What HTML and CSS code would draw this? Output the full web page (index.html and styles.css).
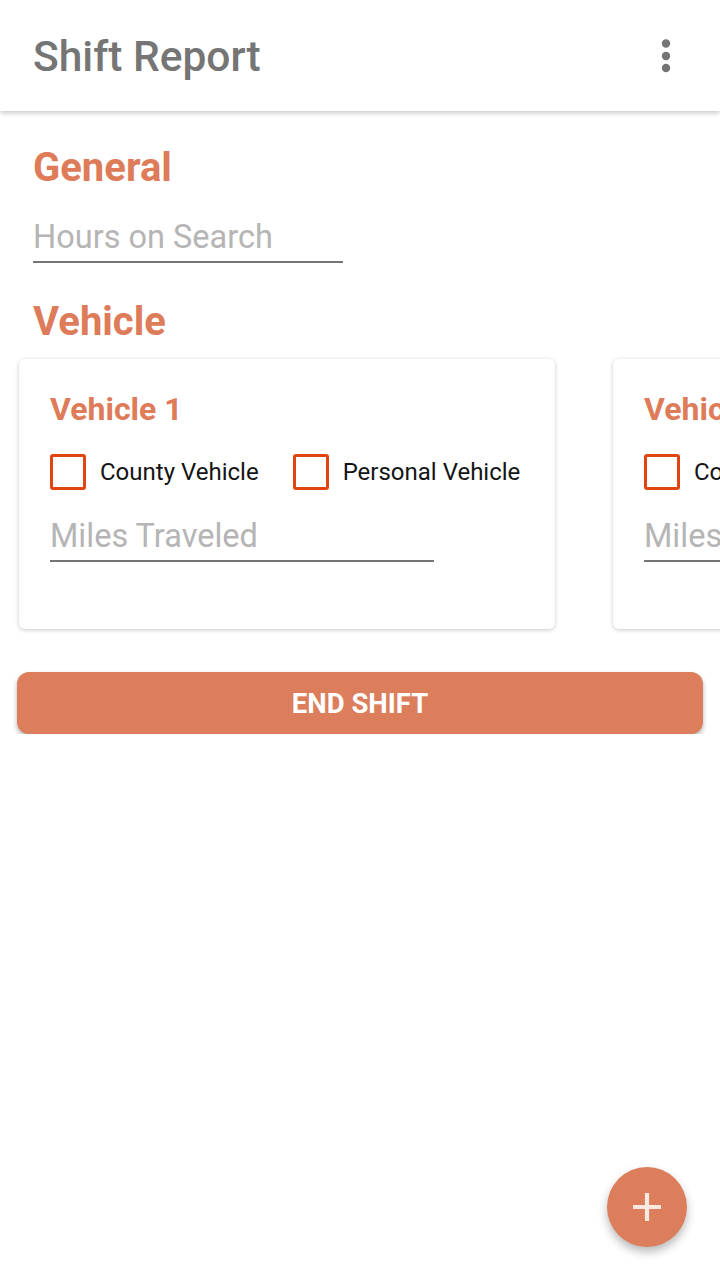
FILE: index.html
```html
<!DOCTYPE html>
<html lang="en">
<head>
<meta charset="utf-8">
<title>Shift Report</title>
<link rel="stylesheet" href="styles.css">
</head>
<body>
<header class="app-bar">
  <h1 class="app-title">Shift Report</h1>
  <button class="menu-btn" aria-label="More options">
    <svg width="10" height="34" viewBox="0 0 10 34"><circle cx="5" cy="4.5" r="4.2" fill="#757575"/><circle cx="5" cy="17" r="4.2" fill="#757575"/><circle cx="5" cy="29" r="4.2" fill="#757575"/></svg>
  </button>
</header>

<main class="content">
  <section class="section">
    <h2 class="section-title">General</h2>
    <input class="field field-hours" type="text" placeholder="Hours on Search">
  </section>

  <section class="section">
    <h2 class="section-title section-title-vehicle">Vehicle</h2>
  </section>

  <div class="card-row">
    <div class="card">
      <h3 class="card-title">Vehicle 1</h3>
      <div class="check-row">
        <label class="check"><input type="checkbox" class="check-box"><span class="check-label">County Vehicle</span></label>
        <label class="check"><input type="checkbox" class="check-box"><span class="check-label">Personal Vehicle</span></label>
      </div>
      <input class="field field-miles" type="text" placeholder="Miles Traveled">
    </div>
    <div class="card">
      <h3 class="card-title">Vehicle 2</h3>
      <div class="check-row">
        <label class="check"><input type="checkbox" class="check-box"><span class="check-label">County Vehicle</span></label>
        <label class="check"><input type="checkbox" class="check-box"><span class="check-label">Personal Vehicle</span></label>
      </div>
      <input class="field field-miles" type="text" placeholder="Miles Traveled">
    </div>
  </div>

  <div class="actions">
    <button class="end-btn">END SHIFT</button>
  </div>
</main>

<button class="fab" aria-label="Add">
  <svg width="30" height="30" viewBox="0 0 30 30"><path d="M15 1v28M1 15h28" stroke="#fbe9df" stroke-width="4.2" fill="none"/></svg>
</button>
</body>
</html>
```

FILE: styles.css
```css
* { box-sizing: border-box; }

html, body {
  margin: 0;
  padding: 0;
  background: #ffffff;
  font-family: Roboto, "Noto Sans", "Liberation Sans", sans-serif;
}

.app-bar {
  height: 111px;
  display: flex;
  align-items: center;
  justify-content: space-between;
  padding: 0 41px 0 33px;
  background: #ffffff;
  box-shadow: 0 2px 5px rgba(0, 0, 0, 0.22);
  position: relative;
  z-index: 2;
}

.app-title {
  margin: 0;
  font-size: 42.5px;
  font-weight: 500;
  color: #757575;
  line-height: 50px;
  padding-top: 2px;
}

.menu-btn {
  border: 0;
  background: none;
  padding: 0;
  width: 26px;
  height: 40px;
  display: flex;
  align-items: center;
  justify-content: center;
}

.content {
  padding: 0;
}

.section {
  padding: 0 33px;
}

.section-title {
  margin: 33px 0 0;
  font-size: 40px;
  line-height: 47px;
  font-weight: 700;
  color: #de7b59;
}

.section-title-vehicle {
  margin-top: 35px;
}

.field {
  display: block;
  border: 0;
  border-bottom: 2px solid #757575;
  border-radius: 0;
  outline: none;
  background: transparent;
  font-family: Roboto, "Noto Sans", "Liberation Sans", sans-serif;
  color: #212121;
  padding: 0 0 5px 0;
}

.field::placeholder {
  color: #b5b5b5;
  opacity: 1;
}

.field-hours {
  margin-top: 27px;
  width: 310px;
  height: 45px;
  font-size: 32.5px;
  line-height: 38px;
}

.card-row {
  display: flex;
  gap: 58px;
  padding: 4px 19px 8px;
  margin-top: 10px;
  overflow: hidden;
}

.card {
  flex: 0 0 536px;
  height: 270px;
  background: #ffffff;
  border-radius: 6px;
  box-shadow: 0 1px 4px rgba(0, 0, 0, 0.22);
  padding: 32px 31px 0;
}

.card-title {
  margin: 0;
  font-size: 32px;
  line-height: 37px;
  font-weight: 700;
  color: #de7b59;
}

.check-row {
  display: flex;
  gap: 34px;
  margin-top: 26px;
  height: 36px;
  align-items: center;
}

.check {
  display: flex;
  align-items: center;
  gap: 14px;
  white-space: nowrap;
}

.check-box {
  appearance: none;
  -webkit-appearance: none;
  margin: 0;
  width: 36px;
  height: 36px;
  border: 3.5px solid #e1450f;
  border-radius: 3px;
  background: #ffffff;
  flex: 0 0 auto;
}

.check-label {
  font-size: 24px;
  line-height: 28px;
  color: #141414;
  padding-bottom: 1px;
}

.field-miles {
  margin-top: 27px;
  width: 384px;
  height: 45px;
  font-size: 32.5px;
  line-height: 38px;
  padding-bottom: 5px;
}

.actions {
  padding: 0 17px;
  margin-top: 35px;
}

.end-btn {
  display: block;
  width: 100%;
  height: 62px;
  border: 0;
  border-radius: 12px;
  background: #dc7d5c;
  color: #ffffff;
  font-family: Roboto, "Noto Sans", "Liberation Sans", sans-serif;
  font-size: 27.5px;
  font-weight: 700;
  box-shadow: 0 3px 5px rgba(0, 0, 0, 0.3);
}

.fab {
  position: fixed;
  right: 33px;
  bottom: 33px;
  width: 80px;
  height: 80px;
  border-radius: 50%;
  border: 0;
  padding: 0;
  background: #dc7d5c;
  display: flex;
  align-items: center;
  justify-content: center;
  box-shadow: 0 5px 10px rgba(0, 0, 0, 0.28);
}
```
